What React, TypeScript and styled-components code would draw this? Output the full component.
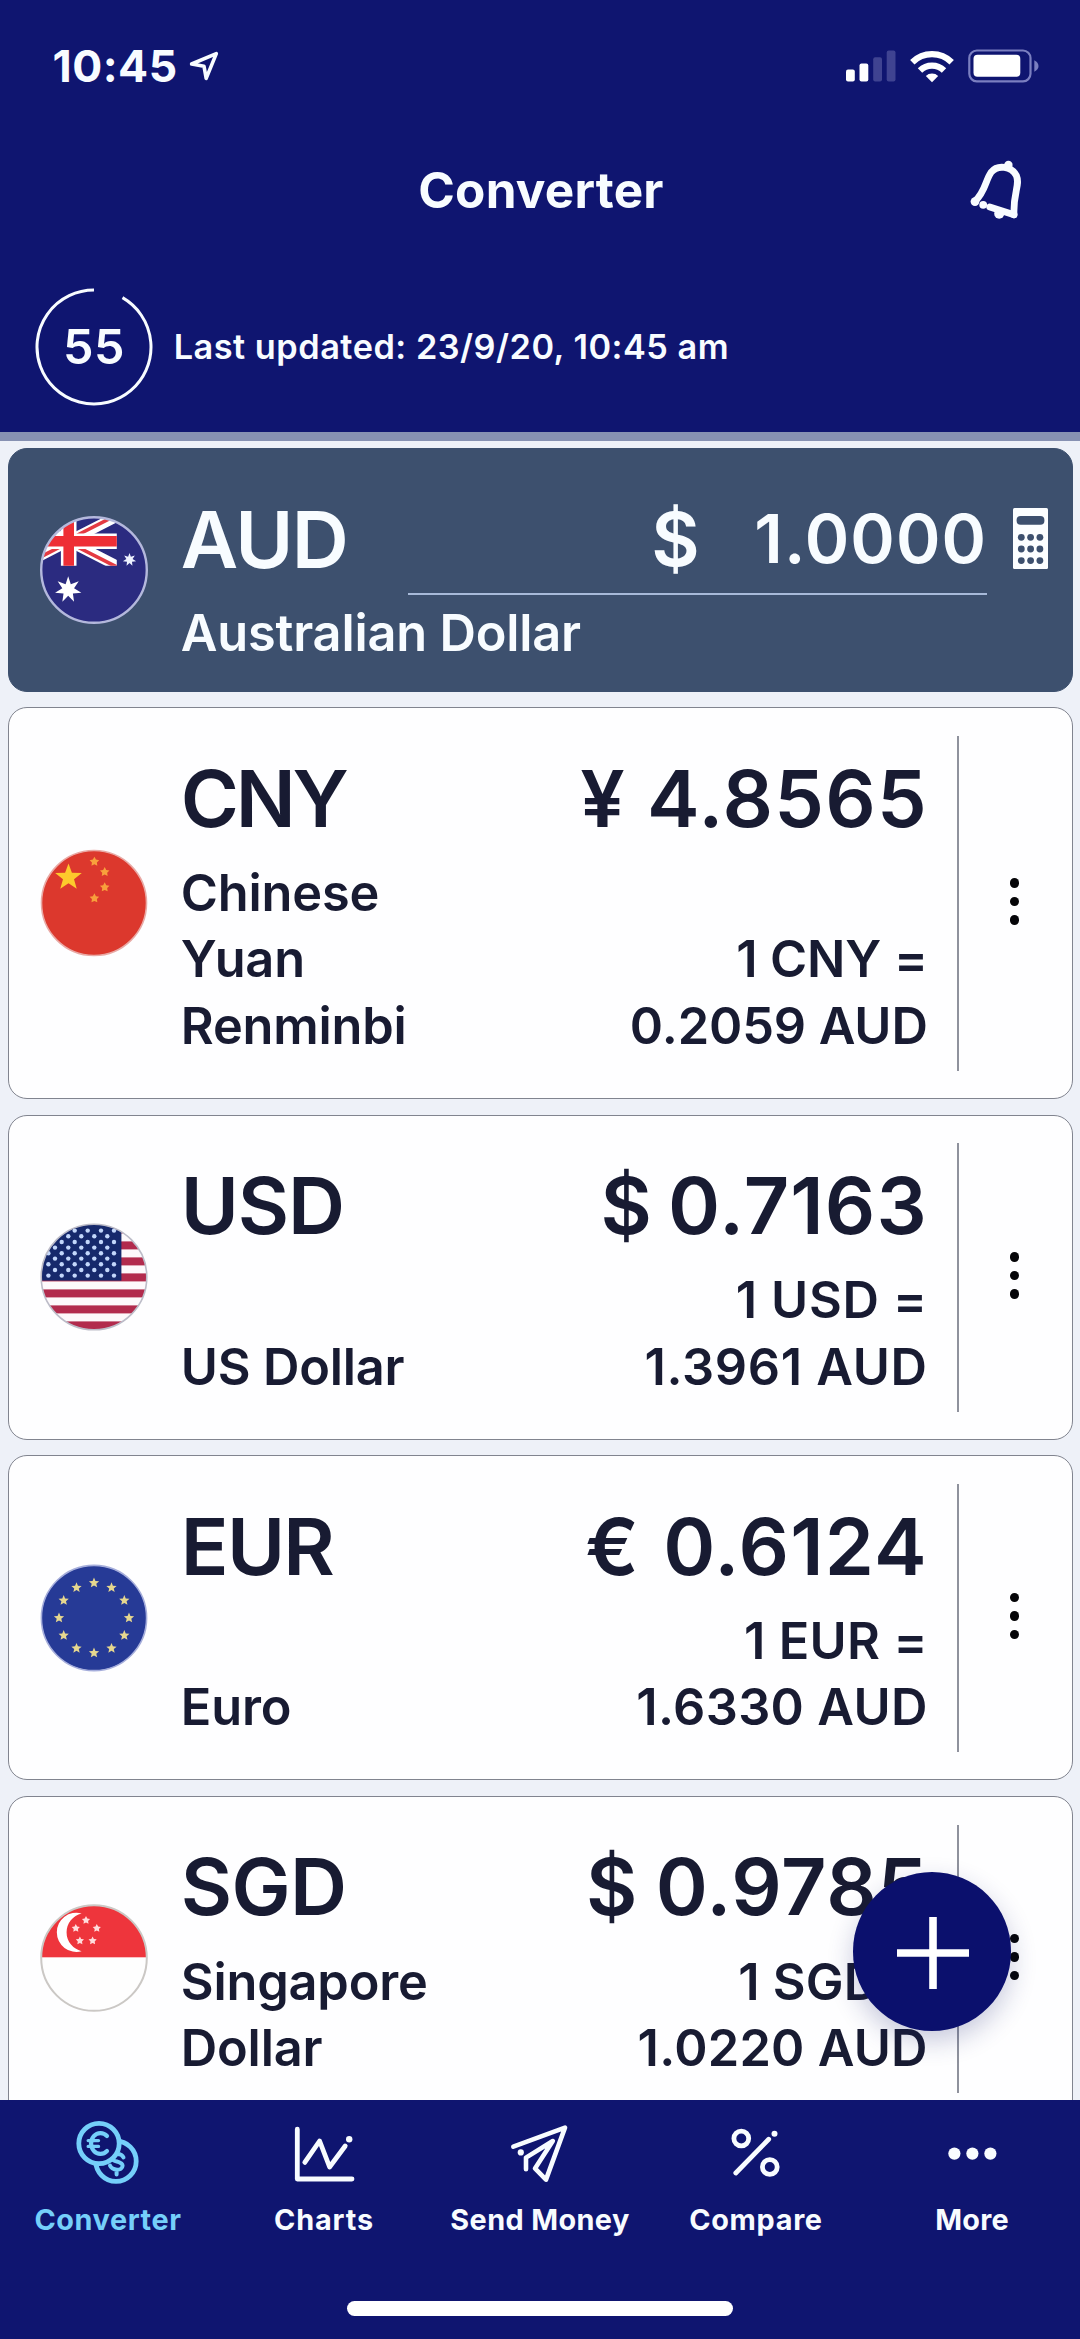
import React from "react";
import styled, { createGlobalStyle } from "styled-components";

const color = {
  navy: "#0f1570",
  slate: "#3d506e",
  page: "#eef1f8",
  ink: "#181b32",
  line: "#81848f",
  white: "#f8fcff",
  accent: "#75cffa",
};

const GlobalStyle = createGlobalStyle`
  * { box-sizing: border-box; }
  html, body { margin: 0; padding: 0; }
  body {
    font-family: Inter, "Liberation Sans", sans-serif;
    font-weight: 600;
    background: ${color.page};
  }
`;

const Screen = styled.div`
  position: relative;
  display: flex;
  flex-direction: column;
  width: 1080px;
  height: 2339px;
  overflow: hidden;
  background: ${color.page};
`;

/* ---------- header ---------- */

const Header = styled.header`
  flex: none;
  height: 441px;
  background: ${color.navy};
  color: ${color.white};
  border-bottom: 9px solid #8791b2;
`;

const StatusBar = styled.div`
  display: flex;
  align-items: center;
  justify-content: space-between;
  height: 132px;
  padding: 0 41px 0 52.5px;
`;

const StatusGroup = styled.div<{ $gap: number }>`
  display: flex;
  align-items: center;
  gap: ${(p) => p.$gap}px;
`;

const Clock = styled.span`
  font-size: 44.5px;
  font-weight: 700;
  line-height: 52px;
  letter-spacing: 0.5px;
`;

const TitleBar = styled.div`
  display: grid;
  grid-template-columns: 1fr auto 1fr;
  align-items: center;
  height: 116px;
  padding: 0 56px 0 58px;
`;

const Title = styled.h1`
  grid-column: 2;
  margin: 0;
  font-size: 49.5px;
  font-weight: 700;
  line-height: 58px;
  letter-spacing: 0.2px;
`;

const IconButton = styled.button`
  justify-self: end;
  display: flex;
  padding: 0;
  border: 0;
  background: none;
  color: inherit;
`;

const UpdateBar = styled.div`
  display: flex;
  align-items: center;
  gap: 20.7px;
  height: 184px;
  padding: 14px 0 0 35px;
`;

const Countdown = styled.div`
  display: grid;
  place-items: center;
  width: 118px;
  height: 118px;
  font-size: 48.5px;
  line-height: 58px;
  letter-spacing: 0.4px;

  > * { grid-area: 1 / 1; }
`;

const UpdatedText = styled.span`
  font-size: 34.3px;
  font-weight: 600;
  line-height: 40px;
  letter-spacing: 0.5px;
`;

/* ---------- currency cards ---------- */

const List = styled.main`
  flex: 1;
  min-height: 0;
  display: flex;
  flex-direction: column;
  gap: 15.8px;
  padding: 7.4px 7px 0 8px;
  overflow: hidden;
`;

const FlagSlot = styled.div`
  flex: none;
  display: flex;
  align-items: center;
  width: 140.8px;
  margin-bottom: 3px;
`;

const Card = styled.section`
  flex: none;
  display: flex;
  align-items: stretch;
  padding: 41.2px 0 38.6px 31px;
  border: 1px solid ${color.line};
  border-radius: 19px;
  background: #fefeff;
  color: ${color.ink};
`;

const BaseCard = styled(Card)`
  padding-bottom: 24.6px;
  border-color: ${color.slate};
  background: ${color.slate};
  color: ${color.white};

  ${FlagSlot} { margin-bottom: 16.4px; }
`;

const Flag = styled.svg`
  display: block;
  width: 108px;
  height: 108px;
  overflow: visible;
`;

const CardBody = styled.div<{ $width: number; $gap: number }>`
  flex: none;
  display: flex;
  flex-direction: column;
  gap: ${(p) => p.$gap}px;
  width: ${(p) => p.$width}px;
`;

const CardRow = styled.div<{ $align: string }>`
  display: flex;
  justify-content: space-between;
  align-items: ${(p) => p.$align};
`;

const Code = styled.span<{ $spacing: number }>`
  font-size: 79px;
  line-height: 96px;
  letter-spacing: ${(p) => p.$spacing}px;
`;

const Rate = styled.span<{ $spacing: number; $word?: number }>`
  font-size: 79px;
  line-height: 96px;
  letter-spacing: ${(p) => p.$spacing}px;
  word-spacing: ${(p) => p.$word ?? 0}px;
  white-space: nowrap;
`;

const Lines = styled.div<{ $end?: boolean; $spacing?: number }>`
  display: flex;
  flex-direction: column;
  align-items: ${(p) => (p.$end ? "flex-end" : "flex-start")};
  font-size: 50.5px;
  line-height: 66.4px;
  letter-spacing: ${(p) => p.$spacing ?? -0.2}px;
  white-space: nowrap;
`;

const AmountField = styled.div`
  display: flex;
  justify-content: flex-end;
  width: 579px;
  height: 104.4px;
  border-bottom: 2px solid #a8bad9;
  line-height: 96px;
`;

const AmountSign = styled.span`
  font-size: 74.5px;
  margin-right: 54.5px;
`;

const Amount = styled.span`
  font-size: 67.5px;
  letter-spacing: 1.1px;
`;

const CalculatorSlot = styled.div`
  padding: 17px 0 0 25.5px;
`;

const Menu = styled.button`
  flex: 1;
  display: flex;
  flex-direction: column;
  align-items: center;
  justify-content: center;
  gap: 9px;
  margin: -13.7px 0 -11.5px 29px;
  padding: 0 2px 4px 0;
  border: 0;
  border-left: 2px solid #8f929d;
  background: none;
`;

const MenuDot = styled.i`
  width: 9.5px;
  height: 9.5px;
  border-radius: 50%;
  background: #050508;
`;

const AddButton = styled.button`
  position: absolute;
  left: 852.5px;
  top: 1872px;
  display: grid;
  place-items: center;
  width: 158.5px;
  height: 158.5px;
  padding: 3px 0 0 3px;
  border: 0;
  border-radius: 50%;
  background: #0b106d;
  box-shadow: 0 10px 26px rgba(24, 32, 110, 0.24);
`;

/* ---------- tab bar ---------- */

const TabBar = styled.nav`
  flex: none;
  display: flex;
  flex-direction: column;
  justify-content: space-between;
  align-items: center;
  height: 239.5px;
  padding: 18.5px 0 23px;
  background: ${color.navy};
`;

const Tabs = styled.div`
  display: grid;
  grid-template-columns: repeat(5, 1fr);
  width: 100%;
`;

const Tab = styled.div<{ $active?: boolean }>`
  display: flex;
  flex-direction: column;
  align-items: center;
  gap: 14.5px;
  color: ${(p) => (p.$active ? color.accent : color.white)};
`;

const TabLabel = styled.span<{ $spacing: number }>`
  font-size: 28.8px;
  font-weight: 700;
  line-height: 34px;
  letter-spacing: ${(p) => p.$spacing}px;
  white-space: nowrap;
`;

const TabIcon = styled.svg`
  display: block;
  width: 70px;
  height: 70px;
  fill: none;
  stroke: currentColor;
  stroke-width: 4.8;
  stroke-linecap: round;
  stroke-linejoin: round;
`;

const HomeIndicator = styled.div`
  width: 386px;
  height: 15px;
  border-radius: 8px;
  background: #fff;
`;

/* ---------- drawings ---------- */

function starPoints(cx: number, cy: number, outer: number, inner: number, tips = 5) {
  return Array.from({ length: tips * 2 }, (_, i) => {
    const r = i % 2 ? inner : outer;
    const a = -Math.PI / 2 + (i * Math.PI) / tips;
    return `${(cx + r * Math.cos(a)).toFixed(2)},${(cy + r * Math.sin(a)).toFixed(2)}`;
  }).join(" ");
}

function AustraliaFlag() {
  return (
    <Flag viewBox="0 0 108 108">
      <clipPath id="au-disc"><circle cx="54" cy="54" r="52.5" /></clipPath>
      <clipPath id="au-jack"><rect x="-19.4" y="0.5" width="96.2" height="49.2" /></clipPath>
      <g clipPath="url(#au-disc)">
        <rect width="108" height="108" fill="#2b2b80" />
        <g clipPath="url(#au-jack)">
          <path d="M-19.4 .5L76.8 49.7M-19.4 49.7L76.8 .5" stroke="#fff" strokeWidth="10.5" />
          <path d="M28.7 26.5L76.8 51M28.7 23.5L76.8 -1M28.7 26.5L-19.4 51" stroke="#e43a42" strokeWidth="3.6" />
          <path d="M28.7 0V50M-20 25.3H77" stroke="#fff" strokeWidth="15.6" />
          <path d="M28.7 0V50M-20 25.3H77" stroke="#ee2e35" strokeWidth="10.6" />
        </g>
        <polygon points={starPoints(28.2, 73.7, 13.5, 6, 7)} fill="#fff" />
        <polygon points={starPoints(89.5, 43.7, 6.8, 3.2, 7)} fill="#eef2ff" />
      </g>
      <circle cx="54" cy="54" r="52.8" fill="none" stroke="#b4b8dc" strokeWidth="2.4" />
    </Flag>
  );
}

function ChinaFlag() {
  return (
    <Flag viewBox="0 0 108 108">
      <circle cx="54" cy="54" r="52.5" fill="#dc382d" stroke="#e9a9a5" strokeWidth="1.6" />
      <polygon points={starPoints(28.5, 28.4, 14, 5.8)} fill="#fdca2c" />
      {[[54.4, 12.7], [64.7, 23], [64.7, 38.3], [54.4, 49.3]].map(([x, y]) => (
        <polygon key={y} points={starPoints(x, y, 5, 2.6)} fill="#f8a03c" />
      ))}
    </Flag>
  );
}

function UsaFlag() {
  const rows = [7.6, 13.3, 19, 24.6, 30.3, 35.6, 41.3, 47, 52.6];
  return (
    <Flag viewBox="0 0 108 108">
      <clipPath id="us-disc"><circle cx="54" cy="54" r="52.8" /></clipPath>
      <g clipPath="url(#us-disc)">
        <rect width="108" height="108" fill="#fdf9fb" />
        {[0, 1, 2, 3, 4, 5, 6].map((i) => (
          <rect key={i} y={2.4 + i * 16} width="108" height="8" fill="#b22b4d" />
        ))}
        <rect width="81.4" height="57.6" fill="#16296c" />
        {rows.map((y, r) =>
          (r % 2 ? [15, 28.3, 41.3, 54.3, 67.3] : [8.4, 21.7, 34.7, 47.7, 61, 74]).map((x) => (
            <circle key={`${x}-${y}`} cx={x} cy={y} r="2.2" fill="#c3d7fb" />
          ))
        )}
      </g>
      <circle cx="54" cy="54" r="52.8" fill="none" stroke="#bcbcc8" strokeWidth="1.6" />
    </Flag>
  );
}

function EuropeFlag() {
  return (
    <Flag viewBox="0 0 108 108">
      <circle cx="54" cy="54" r="52.6" fill="#263a96" stroke="#a5addb" strokeWidth="1.6" />
      {Array.from({ length: 12 }, (_, i) => {
        const a = (i * Math.PI) / 6;
        return (
          <polygon
            key={i}
            points={starPoints(54 + 35 * Math.sin(a), 54 - 35 * Math.cos(a), 5.4, 2.4)}
            fill="#e6d78f"
          />
        );
      })}
    </Flag>
  );
}

function SingaporeFlag() {
  return (
    <Flag viewBox="0 0 108 108">
      <clipPath id="sg-disc"><circle cx="54" cy="54" r="53" /></clipPath>
      <g clipPath="url(#sg-disc)">
        <rect width="108" height="108" fill="#fefefe" />
        <rect width="108" height="53.3" fill="#ee353c" />
        <path d="M41.6 9.4A19.6 19.6 0 1 0 41.6 47.2A19.4 19.4 0 0 1 41.6 9.4Z" fill="#fff" />
        {[[46, 16.3], [35.8, 24.3], [56.8, 24.3], [39.9, 36.7], [52.6, 36.7]].map(([x, y]) => (
          <polygon key={x} points={starPoints(x, y, 4.3, 2.2)} fill="#ffdcdc" />
        ))}
      </g>
      <circle cx="54" cy="54" r="52.8" fill="none" stroke="#cbc8c5" strokeWidth="2" />
    </Flag>
  );
}

function LocationIcon() {
  return (
    <svg width="30" height="32" viewBox="188 50 30 32" fill="none" stroke="#f8fcff" strokeWidth="3.6" strokeLinejoin="round">
      <path d="M190.6 64L215.3 53.6L205.2 78.4L203 66.2Z" />
    </svg>
  );
}

function SignalIcon() {
  return (
    <svg width="50" height="32" viewBox="846.5 50.5 50 32">
      <rect x="846.5" y="70" width="8.8" height="12" rx="2" fill="#fff" />
      <rect x="860" y="64" width="8.8" height="18" rx="2" fill="#fff" />
      <rect x="873.7" y="57.7" width="8.8" height="24.3" rx="2" fill="#3f4391" />
      <rect x="887.2" y="51" width="8.8" height="31" rx="2" fill="#3f4391" />
    </svg>
  );
}

function WifiIcon() {
  return (
    <svg width="44" height="33" viewBox="910 49.5 44 33">
      <g fill="none" stroke="#fff" strokeWidth="6.2">
        <path d="M912.3 61.8A28 28 0 0 1 951.7 61.8" />
        <path d="M920 70A17 17 0 0 1 944 70" />
      </g>
      <path d="M932 81.8L925.8 75.4A9 9 0 0 1 938.2 75.4Z" fill="#fff" />
    </svg>
  );
}

function BatteryIcon() {
  return (
    <svg width="71" height="34" viewBox="968.5 49.5 71 34">
      <rect x="969.8" y="51" width="61.2" height="30.8" rx="7.5" fill="none" stroke="#7b7fc0" strokeWidth="2.2" />
      <rect x="974" y="55.3" width="46.8" height="22" rx="4" fill="#fff" />
      <path d="M1034.8 60.7Q1039 63 1039 66.5T1034.8 72.3Z" fill="#7b7fc0" />
    </svg>
  );
}

function BellIcon() {
  return (
    <svg width="54" height="62" viewBox="970 160 54 62" fill="none" stroke="#f8fcff" strokeWidth="6.8" strokeLinecap="round" strokeLinejoin="round">
      <path d="M974.8 202.4C985.5 192.5 985.5 181 991 173.4C997.6 165.2 1011.5 167.2 1016.4 176.6C1020.4 186.4 1013 193 1014 215.8" />
      <path d="M989.8 208L1014 215.8" />
      <g fill="#f8fcff" stroke="none">
        <circle cx="975" cy="202.6" r="4.4" />
        <circle cx="983.2" cy="205.8" r="3.9" />
        <circle cx="1008.4" cy="166" r="4.2" />
        <circle cx="999.2" cy="214.8" r="5" />
      </g>
    </svg>
  );
}

function CountdownRing() {
  return (
    <svg width="118" height="118" viewBox="0 0 118 118" fill="none" stroke="#f8fcff" strokeWidth="3">
      <path d="M87.5 9.64A57 57 0 1 1 59 2" />
    </svg>
  );
}

function CalculatorIcon() {
  return (
    <svg width="35" height="61" viewBox="0 0 35 61">
      <rect width="35" height="61" rx="1.5" fill="#fcfeff" />
      <rect x="3.6" y="8" width="27.8" height="8.8" rx="4" fill={color.slate} />
      {[29.3, 41, 52.6].map((y) =>
        [8.3, 17.6, 26.9].map((x) => <circle key={`${x}-${y}`} cx={x} cy={y} r="3.4" fill={color.slate} />)
      )}
    </svg>
  );
}

function CoinsIcon() {
  return (
    <TabIcon viewBox="0 0 70 70">
      <mask id="front-coin">
        <rect width="70" height="70" fill="#fff" stroke="none" />
        <circle cx="26" cy="25.5" r="20" fill="#000" stroke="none" />
      </mask>
      <circle cx="26" cy="25.5" r="20.2" />
      <g mask="url(#front-coin)">
        <circle cx="43" cy="43.2" r="20.2" />
        <path d="M50.5 39.4C48.5 34.4 38.4 35 38.6 39.8C39 44.4 49.6 42.6 49.6 47.8C49.4 53.4 39 52.6 37 47.6M43.6 52.5V56.4M43.6 35V32" strokeWidth="4" />
      </g>
      <path d="M34 18A9.4 10.4 0 1 0 34 33" strokeWidth="4.2" />
      <path d="M15.2 22.6H25.5M15.2 28.4H25.5" strokeWidth="3.4" />
    </TabIcon>
  );
}

function ChartIcon() {
  return (
    <TabIcon viewBox="0 0 70 70">
      <path d="M8.3 11.2V61H63" />
      <path d="M15.8 44.4L30.6 23L40.6 49L56.2 28" />
      <circle cx="60.2" cy="21.3" r="3.2" fill="currentColor" stroke="none" />
    </TabIcon>
  );
}

function SendIcon() {
  return (
    <TabIcon viewBox="0 0 70 70">
      <path d="M8.3 28.6L60 9.6L41 61.6L30 50.4L47.8 23L21 39.6V51.2" strokeWidth="4.6" />
      <circle cx="15.8" cy="34.4" r="3.1" fill="currentColor" stroke="none" />
    </TabIcon>
  );
}

function PercentIcon() {
  return (
    <TabIcon viewBox="0 0 70 70">
      <circle cx="20.3" cy="20.5" r="7.4" />
      <circle cx="48.8" cy="49" r="7.4" />
      <path d="M14.8 55L47.7 21.3" />
      <circle cx="53.5" cy="15.7" r="3" fill="currentColor" stroke="none" />
    </TabIcon>
  );
}

function MoreIcon() {
  return (
    <TabIcon viewBox="0 0 70 70">
      {[17.4, 35.4, 53.4].map((x) => (
        <circle key={x} cx={x} cy="35.6" r="6.1" fill="currentColor" stroke="none" />
      ))}
    </TabIcon>
  );
}

/* ---------- data ---------- */

const rates = [
  { code: "CNY", codeGap: -3.2, name: ["Chinese", "Yuan", "Renminbi"], rate: "¥ 4.8565", rateGap: 1.2, wordGap: 0, inverse: ["1 CNY =", "0.2059 AUD"], inverseGap: -0.1, flag: <ChinaFlag /> },
  { code: "USD", codeGap: -1.1, name: ["US Dollar"], rate: "$ 0.7163", rateGap: 1.1, wordGap: -6, inverse: ["1 USD =", "1.3961 AUD"], inverseGap: 0.7, flag: <UsaFlag /> },
  { code: "EUR", codeGap: -1.7, name: ["Euro"], rate: "€ 0.6124", rateGap: 1.2, wordGap: 2, inverse: ["1 EUR =", "1.6330 AUD"], inverseGap: 0.35, flag: <EuropeFlag /> },
  { code: "SGD", codeGap: -0.7, name: ["Singapore", "Dollar"], rate: "$ 0.9785", rateGap: 0.7, wordGap: -3, inverse: ["1 SGD =", "1.0220 AUD"], inverseGap: 0.25, flag: <SingaporeFlag /> },
];

const tabs = [
  { label: "Converter", spacing: 0.6, icon: <CoinsIcon />, active: true },
  { label: "Charts", spacing: 0.85, icon: <ChartIcon /> },
  { label: "Send Money", spacing: 0.4, icon: <SendIcon /> },
  { label: "Compare", spacing: 0.7, icon: <PercentIcon /> },
  { label: "More", spacing: 0.2, icon: <MoreIcon /> },
];

export default function App() {
  return (
    <Screen>
      <GlobalStyle />
      <Header>
        <StatusBar>
          <StatusGroup $gap={11}>
            <Clock>10:45</Clock>
            <LocationIcon />
          </StatusGroup>
          <StatusGroup $gap={14}>
            <SignalIcon />
            <WifiIcon />
            <BatteryIcon />
          </StatusGroup>
        </StatusBar>
        <TitleBar>
          <Title>Converter</Title>
          <IconButton aria-label="Rate alerts"><BellIcon /></IconButton>
        </TitleBar>
        <UpdateBar>
          <Countdown>
            <CountdownRing />
            <span>55</span>
          </Countdown>
          <UpdatedText>Last updated: 23/9/20, 10:45 am</UpdatedText>
        </UpdateBar>
      </Header>

      <List>
        <BaseCard>
          <FlagSlot><AustraliaFlag /></FlagSlot>
          <CardBody $width={806.4} $gap={4.7}>
            <CardRow $align="flex-start">
              <Code $spacing={-1.5}>AUD</Code>
              <AmountField>
                <AmountSign>$</AmountSign>
                <Amount>1.0000</Amount>
              </AmountField>
            </CardRow>
            <Lines>Australian Dollar</Lines>
          </CardBody>
          <CalculatorSlot><CalculatorIcon /></CalculatorSlot>
        </BaseCard>

        {rates.map((r) => (
          <Card key={r.code}>
            <FlagSlot>{r.flag}</FlagSlot>
            <CardBody $width={747} $gap={14.4}>
              <CardRow $align="flex-start">
                <Code $spacing={r.codeGap}>{r.code}</Code>
                <Rate $spacing={r.rateGap} $word={r.wordGap}>{r.rate}</Rate>
              </CardRow>
              <CardRow $align="flex-end">
                <Lines>
                  {r.name.map((line) => <span key={line}>{line}</span>)}
                </Lines>
                <Lines $end $spacing={r.inverseGap}>
                  {r.inverse.map((line) => <span key={line}>{line}</span>)}
                </Lines>
              </CardRow>
            </CardBody>
            <Menu aria-label={`${r.code} options`}>
              <MenuDot />
              <MenuDot />
              <MenuDot />
            </Menu>
          </Card>
        ))}
      </List>

      <AddButton aria-label="Add currency">
        <svg width="72" height="72" viewBox="0 0 72 72" stroke="#fff" strokeWidth="7.6">
          <path d="M36 0V72M0 36H72" />
        </svg>
      </AddButton>

      <TabBar>
        <Tabs>
          {tabs.map((t) => (
            <Tab key={t.label} $active={t.active}>
              {t.icon}
              <TabLabel $spacing={t.spacing}>{t.label}</TabLabel>
            </Tab>
          ))}
        </Tabs>
        <HomeIndicator />
      </TabBar>
    </Screen>
  );
}
